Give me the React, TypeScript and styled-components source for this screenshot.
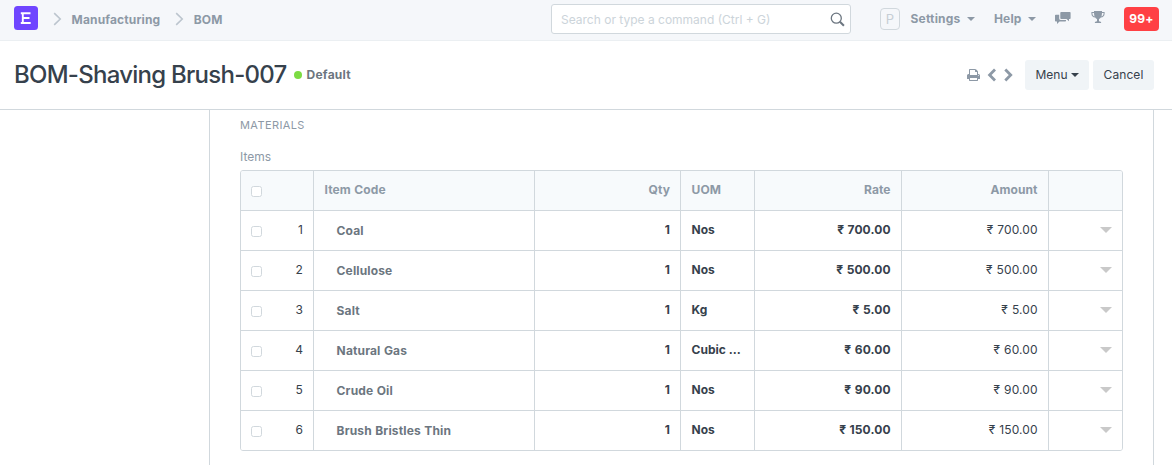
import React from "react";
import styled, { createGlobalStyle } from "styled-components";

const c = {
  border: "#d1d8dd",
  muted: "#8d99a6",
  text: "#36414c",
  link: "#6c7680",
};

const GlobalStyle = createGlobalStyle`
  * { box-sizing: border-box; }
  html, body { margin: 0; padding: 0; height: 100%; overflow: hidden; background: #fff; }
  body { font-family: Inter, "Open Sans", sans-serif; font-size: 12px; line-height: 17px; color: ${c.text}; -webkit-font-smoothing: antialiased; }
`;

const Page = styled.div`
  display: flex;
  flex-direction: column;
  height: 465px;
  overflow: hidden;
`;

const Navbar = styled.header`
  display: flex;
  align-items: flex-start;
  height: 41px;
  flex: none;
  padding-left: 14px;
  background: #f5f7fa;
  border-bottom: 1px solid #ebeff2;
  color: ${c.muted};
  font-weight: 700;
`;

const Logo = styled.svg`
  display: block;
  width: 24px;
  height: 24px;
  margin-top: 6px;
`;

const Crumbs = styled.nav`
  display: flex;
  align-items: center;
  width: 513px;
  height: 38px;
`;

const Chevron = styled.svg<{ $left: number; $right: number }>`
  display: block;
  flex: none;
  width: 9px;
  height: 14px;
  margin: 0 ${(p) => p.$right}px 0 ${(p) => p.$left}px;
`;

const Label = styled.span<{ $spacing?: number }>`
  white-space: nowrap;
  letter-spacing: ${(p) => p.$spacing ?? 0}px;
`;

const Search = styled.div`
  display: flex;
  align-items: center;
  justify-content: space-between;
  width: 300px;
  height: 30px;
  margin-top: 4px;
  padding: 0 5px 0 9px;
  border: 1px solid ${c.border};
  border-radius: 3px;
  background: #fff;
  color: #ccd4da;
  font-weight: 400;
`;

const NavRight = styled.div`
  display: flex;
  align-items: center;
  height: 38px;
  padding-left: 29px;
`;

const Avatar = styled.span`
  display: flex;
  align-items: center;
  justify-content: center;
  width: 20px;
  height: 22px;
  margin-right: 10.5px;
  border: 1px solid ${c.border};
  border-radius: 4px;
  color: #c6ced5;
  font-size: 13px;
  font-weight: 400;
`;

const NavLink = styled.span<{ $width: number }>`
  display: flex;
  align-items: center;
  gap: 6px;
  width: ${(p) => p.$width}px;
  margin-top: -1px;
`;

const Caret = styled.i<{ $size?: number; $color?: string }>`
  width: 0;
  height: 0;
  margin-top: 1px;
  border: ${(p) => p.$size ?? 4}px solid transparent;
  border-top-color: ${(p) => p.$color ?? "currentColor"};
  border-bottom: 0;
`;

const Icon = styled.svg<{ $gap?: number; $lift?: number }>`
  display: block;
  flex: none;
  margin-right: ${(p) => p.$gap ?? 0}px;
  margin-bottom: ${(p) => p.$lift ?? 0}px;
`;

const Badge = styled.span`
  display: flex;
  align-items: center;
  justify-content: center;
  width: 35px;
  height: 24px;
  padding-bottom: 1px;
  border-radius: 4px;
  background: #ff4044;
  color: #fff;
  letter-spacing: 0.3px;
`;

const PageHead = styled.section`
  display: flex;
  align-items: center;
  height: 69px;
  flex: none;
  padding: 0 18px 0 14px;
  border-bottom: 1px solid ${c.border};
`;

const Title = styled.h1`
  margin: 0;
  font-size: 24px;
  line-height: 32px;
  font-weight: 500;
  white-space: nowrap;
  letter-spacing: -0.74px;
`;

const Status = styled.span`
  display: flex;
  align-items: center;
  gap: 5px;
  margin-left: 7px;
  padding-bottom: 2px;
  color: ${c.link};
  font-weight: 700;
  &::before {
    content: "";
    width: 8px;
    height: 8px;
    margin-top: 2px;
    border-radius: 50%;
    background: #7cdb43;
  }
`;

const Actions = styled.div`
  display: flex;
  align-items: center;
  margin-left: auto;
`;

const Button = styled.button<{ $width: number }>`
  display: flex;
  align-items: center;
  justify-content: center;
  gap: 3px;
  width: ${(p) => p.$width}px;
  height: 30px;
  margin-left: 4px;
  padding: 0 0 2px;
  border: 0;
  border-radius: 3px;
  background: #f0f4f7;
  color: ${c.text};
  font: inherit;
`;

const FormBody = styled.main`
  width: 945px;
  flex: 1;
  margin-left: 209px;
  padding: 7px 30px 0;
  border: solid ${c.border};
  border-width: 0 1px;
  color: ${c.muted};
`;

const SectionHeading = styled.div`
  font-size: 11px;
  letter-spacing: 0.4px;
`;

const FieldLabel = styled.div`
  margin: 14px 0 5px;
`;

const Table = styled.div`
  width: 883px;
  border: 1px solid ${c.border};
  border-radius: 3px;
  overflow: hidden;
`;

const Row = styled.div<{ $head?: boolean }>`
  display: grid;
  grid-template-columns: 73px 221px 146px 74px 147px 147px 73px;
  height: 40px;
  background: ${(p) => (p.$head ? "#f7fafc" : "#fff")};
  color: ${(p) => (p.$head ? c.muted : c.text)};
  font-weight: ${(p) => (p.$head ? 700 : 400)};
  border-bottom: 1px solid ${c.border};
  &:last-child { height: 39px; border-bottom: 0; }
`;

const Cell = styled.div<{ $right?: boolean; $bold?: boolean }>`
  padding: 10px 10px 10px 10.6px;
  border-right: 1px solid ${c.border};
  text-align: ${(p) => (p.$right ? "right" : "left")};
  font-weight: ${(p) => (p.$bold ? 700 : "inherit")};
  letter-spacing: 0.1px;
  word-spacing: 0.5px;
  white-space: nowrap;
  &:last-child { border-right: 0; }
`;

const UomCell = styled(Cell)`
  letter-spacing: 0;
  word-spacing: 0;
`;

const MoneyCell = styled(Cell)`
  padding-right: 10.4px;
`;

const IndexCell = styled(Cell)`
  display: flex;
  justify-content: space-between;
  padding-left: 10px;
`;

const CodeCell = styled(Cell)`
  padding: 11px 10px 8px 22.6px;
  color: ${c.link};
  font-weight: 700;
  letter-spacing: 0.14px;
`;

const ToggleCell = styled(Cell)`
  display: flex;
  justify-content: flex-end;
  padding-top: 15px;
`;

const Check = styled.span`
  width: 11px;
  height: 11px;
  margin-top: 5px;
  border: 1px solid ${c.border};
  border-radius: 2.5px;
  background: #fff;
`;

const Crumb = ({ left, right }: { left: number; right: number }) => (
  <Chevron $left={left} $right={right} viewBox="0 0 9 14" fill="none" stroke="#bcc5ce" strokeWidth="1.6">
    <path d="M1.2 1.2 7.2 7l-6 5.8" />
  </Chevron>
);

const items = [
  ["Coal", "Nos", "700.00"],
  ["Cellulose", "Nos", "500.00"],
  ["Salt", "Kg", "5.00"],
  ["Natural Gas", "Cubic ...", "60.00"],
  ["Crude Oil", "Nos", "90.00"],
  ["Brush Bristles Thin", "Nos", "150.00"],
];

export default function App() {
  return (
    <Page>
      <GlobalStyle />
      <Navbar>
        <Logo viewBox="0 0 24 24">
          <rect width="24" height="24" rx="3.5" fill="#6f45ff" />
          <path d="M6.8 7.2h9.7M8 12h7.5M6.8 17h9.9M8.8 6.2v11.6" stroke="#fff" strokeWidth="1.9" fill="none" />
        </Logo>
        <Crumbs>
          <Crumb left={15} right={9.6} />
          <Label $spacing={0.15}>Manufacturing</Label>
          <Crumb left={14.4} right={10} />
          <Label $spacing={0.15}>BOM</Label>
        </Crumbs>
        <Search>
          <Label>Search or type a command (Ctrl + G)</Label>
          <Icon width="15" height="15" viewBox="0 0 15 15" fill="none" stroke="#6c7680">
            <circle cx="6.3" cy="6.2" r="5" strokeWidth="1.3" />
            <path d="m9.9 9.8 4 4" strokeWidth="2" />
          </Icon>
        </Search>
        <NavRight>
          <Avatar>P</Avatar>
          <NavLink $width={83.5}><Label $spacing={0.2}>Settings</Label><Caret /></NavLink>
          <NavLink $width={61}><Label $spacing={0.15}>Help</Label><Caret /></NavLink>
          <Icon width="16" height="13" viewBox="0 0 16 13" fill="currentColor" $gap={20} $lift={2}>
            <path d="M6.2 0h8.6q.8 0 .8.8v5.4q0 .8-.8.8H14v2.3L11.5 7H6.200q-.9 0-.9-.8V.8q0-.8.9-.8Z" />
            <path d="M4.2 2.8H.8q-.8 0-.8.8v5.200q0 .8.8.8H2V12l2.500-2.400h5.700q.8 0 .8-.8V8.100H5.900q-1.700 0-1.700-1.600Z" />
          </Icon>
          <Icon width="14" height="14" viewBox="0 0 14 14" fill="currentColor" $gap={19} $lift={4}>
            <path fillRule="evenodd" d="M3 1h8v1h2.600v1.500C13.600 6 12.200 7.300 9.800 7.600 9.200 8.500 8.700 8.900 8 9v2.200c1.500.1 2.200.7 2.200 1.800H3.800c0-1.100.7-1.700 2.200-1.800V9c-.7-.1-1.200-.5-1.800-1.400C1.800 7.300.4 6 .4 3.500V2H3Zm0 2H1.400c0 1.800.7 2.900 2.200 3.400Q3.100 5.200 3 3Zm8 0q-.1 2.200-.6 3.400C11.900 5.900 12.600 4.800 12.600 3Z" />
          </Icon>
          <Badge>99+</Badge>
        </NavRight>
      </Navbar>
      <PageHead>
        <Title>BOM-Shaving Brush-007</Title>
        <Status><Label $spacing={0.25}>Default</Label></Status>
        <Actions>
          <Icon width="13" height="14" viewBox="0 0 1664 1792" fill={c.muted} $gap={7.5}>
            <path d="M384 1536h896v-256h-896v256zM384 896h896v-384h-160q-40 0-68-28t-28-68v-160h-640v640zM1536 960q0-26-19-45t-45-19-45 19-19 45 19 45 45 19 45-19 19-45zM1664 960v416q0 13-9.500 22.500t-22.500 9.500h-224v160q0 40-28 68t-68 28h-960q-40 0-68-28t-28-68v-160h-224q-13 0-22.500-9.500t-9.500-22.500v-416q0-79 56.500-135.500t135.500-56.500h64v-544q0-40 28-68t68-28h672q40 0 88 20t76 48l152 152q28 28 48 76t20 88v256h64q79 0 135.500 56.500t56.500 135.500z" />
          </Icon>
          <Icon width="11" height="14" viewBox="0 0 11 14" fill="none" stroke={c.muted} strokeWidth="2.8" $gap={5}>
            <path d="M8 1.600 2.600 7 8 12.400" />
          </Icon>
          <Icon width="11" height="14" viewBox="0 0 11 14" fill="none" stroke={c.muted} strokeWidth="2.8" $gap={7}>
            <path d="M2.300 1.600 7.700 7l-5.400 5.400" />
          </Icon>
          <Button $width={64}><Label>Menu</Label><Caret /></Button>
          <Button $width={61}><Label $spacing={0.1}>Cancel</Label></Button>
        </Actions>
      </PageHead>
      <FormBody>
        <SectionHeading>MATERIALS</SectionHeading>
        <FieldLabel>Items</FieldLabel>
        <Table>
          <Row $head>
            <IndexCell><Check /></IndexCell>
            <Cell>Item Code</Cell>
            <Cell $right>Qty</Cell>
            <Cell>UOM</Cell>
            <MoneyCell $right>Rate</MoneyCell>
            <MoneyCell $right>Amount</MoneyCell>
            <Cell />
          </Row>
          {items.map(([code, uom, price], i) => (
            <Row key={code}>
              <IndexCell><Check /><span>{i + 1}</span></IndexCell>
              <CodeCell>{code}</CodeCell>
              <Cell $right $bold>1</Cell>
              <UomCell $bold>{uom}</UomCell>
              <MoneyCell $right $bold>₹ {price}</MoneyCell>
              <MoneyCell $right>₹ {price}</MoneyCell>
              <ToggleCell><Caret $size={6} $color="#c9c9c9" /></ToggleCell>
            </Row>
          ))}
        </Table>
      </FormBody>
    </Page>
  );
}
